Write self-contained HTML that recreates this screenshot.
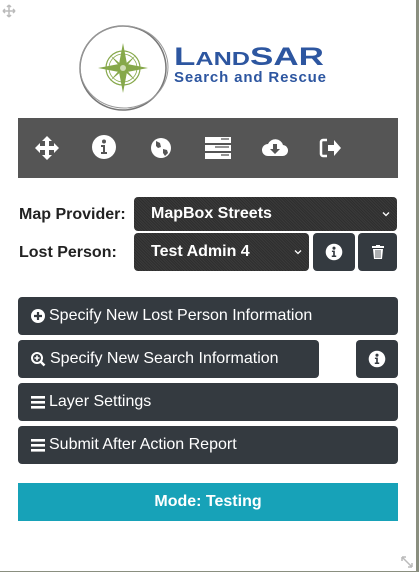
<!DOCTYPE html>
<html><head><meta charset="utf-8"><style>
*{margin:0;padding:0;box-sizing:border-box}
html,body{width:419px;height:572px;overflow:hidden;background:#8a8f80;font-family:"Liberation Sans",sans-serif}
#p{position:absolute;left:0;top:0;width:416px;height:571px;background:#fff}
.a{position:absolute}
.tb{left:18px;top:118px;width:380px;height:60px;background:#555}
.lbl{font-weight:bold;font-size:16px;color:#222}
.sel{background:#333 repeating-linear-gradient(45deg,#3a3a3a 0 1px,#2e2e2e 1px 2px);border-radius:4px;color:#fff;font-weight:bold;font-size:16px;padding-left:17px}
.btn{background:#343a40;border-radius:4px;color:#fff;font-size:16px;padding-left:13px;display:flex;align-items:center}
.btn svg{margin-right:4px}
.ib{background:#343a40;border-radius:4px;display:flex;align-items:center;justify-content:center}
.car{position:absolute;right:7px;top:50%;margin-top:-3px}
</style></head><body><div id="p">
<svg class="a" style="left:2px;top:4px" width="14" height="14" viewBox="0 0 14 14"><path d="M7 1v12M1 7h12M7 1l-2 2M7 1l2 2M7 13l-2-2M7 13l2-2M1 7l2-2M1 7l2 2M13 7l-2-2M13 7l-2 2" stroke="#bbb" stroke-width="1.5" fill="none"/></svg>
<svg class="a" style="left:76px;top:22px" width="96" height="92" viewBox="0 0 96 92">
<ellipse cx="47" cy="46" rx="43" ry="42" fill="none" stroke="#777" stroke-width="1.5"/>
<ellipse cx="48" cy="45" rx="44" ry="41" fill="none" stroke="#999" stroke-width="1"/>
<g transform="translate(47,46)" fill="#86a84a" stroke="#86a84a">
<circle r="17" fill="none" stroke-width="1.2"/><circle r="14" fill="none" stroke-width="0.8"/>
<path d="M0-25L4-4L25 0L4 4L0 25L-4 4L-25 0L-4-4Z" stroke="none"/>
<path d="M13-13L2 0L13 13L0 2L-13 13L-2 0L-13-13L0-2Z" stroke="none"/>
<circle r="3" fill="#cfdcb5" stroke="none"/></g></svg>
<div class="a" style="left:174px;top:44px;color:#2d56a0;font-weight:bold;font-size:25px;line-height:26px;white-space:nowrap;transform:scaleX(1.4);transform-origin:0 0">L<span style="font-size:18px">AND</span>SAR</div>
<div class="a" style="left:174px;top:70px;color:#2d56a0;font-weight:bold;font-size:15px;letter-spacing:0.85px;line-height:16px;white-space:nowrap">Search and Rescue</div>
<div class="a tb"></div>
<svg class="a" style="left:34px;top:135px" width="26" height="26" viewBox="0 0 26 26" fill="#fff"><path d="M13 1l5 5h-3v5h5V8l5 5-5 5v-3h-5v5h3l-5 5-5-5h3v-5H6v3l-5-5 5-5v3h5V6H8z"/></svg>
<svg class="a" style="left:91px;top:134px" width="26" height="26" viewBox="0 0 26 26"><circle cx="13" cy="13" r="12" fill="#fff"/><circle cx="13" cy="7.5" r="2" fill="#555"/><path d="M10 11h4v7h2v2h-6v-2h2v-5h-2z" fill="#555"/></svg>
<svg class="a" style="left:150px;top:137px" width="22" height="22" viewBox="0 0 22 22"><circle cx="11" cy="11" r="10" fill="#fff"/><path d="M6 4l4 2 1 4-3 1-2-2zM13 12l4 1 1 3-3 3-2-3z" fill="#555"/></svg>
<svg class="a" style="left:205px;top:137px" width="26" height="22" viewBox="0 0 26 22" fill="#fff"><rect x="0" y="0" width="26" height="6"/><rect x="0" y="8" width="26" height="6"/><rect x="0" y="16" width="26" height="6"/><path d="M16 2h8M10 10h14M16 18h8" stroke="#555" stroke-width="1.2"/></svg>
<svg class="a" style="left:262px;top:136px" width="26" height="22" viewBox="0 0 26 22"><path d="M6 20a6 6 0 0 1 0-12a8 8 0 0 1 15 1a5.5 5.5 0 0 1-1 11z" fill="#fff"/><path d="M11 8h4v5h3l-5 5-5-5h3z" fill="#555"/></svg>
<svg class="a" style="left:319px;top:138px" width="23" height="20" viewBox="0 0 23 20" fill="#fff"><path d="M8 2H4a2 2 0 0 0-2 2v12a2 2 0 0 0 2 2h4" stroke="#fff" stroke-width="2.5" fill="none"/><path d="M9 7h6V2l7 8-7 8v-5H9z"/></svg>
<div class="a lbl" style="left:19px;top:206px">Map Provider:</div>
<div class="a lbl" style="left:19px;top:244px">Lost Person:</div>
<div class="a sel" style="left:134px;top:197px;width:263px;height:34px;line-height:34px">MapBox Streets<svg class="car" width="8" height="6" viewBox="0 0 8 6"><path d="M1 1.5l3 3 3-3" stroke="#fff" stroke-width="1.3" fill="none"/></svg></div>
<div class="a sel" style="left:134px;top:233px;width:175px;height:38px;line-height:38px">Test Admin 4<svg class="car" width="8" height="6" viewBox="0 0 8 6"><path d="M1 1.5l3 3 3-3" stroke="#fff" stroke-width="1.3" fill="none"/></svg></div>
<div class="a ib" style="left:313px;top:233px;width:42px;height:38px"><svg width="18" height="18" viewBox="0 0 26 26"><circle cx="13" cy="13" r="12" fill="#fff"/><circle cx="13" cy="7.5" r="2.2" fill="#343a40"/><path d="M10 11h4.2v7h2v2.2h-6.4v-2.2h2v-5h-1.8z" fill="#343a40"/></svg></div>
<div class="a ib" style="left:358px;top:233px;width:39px;height:38px"><svg width="12" height="14" viewBox="0 0 12 14" fill="#fff"><rect x="0" y="1" width="12" height="2"/><rect x="4" y="0" width="4" height="2"/><path d="M1 4h10l-1 10H2z"/><path d="M4 5v8M6 5v8M8 5v8" stroke="#343a40" stroke-width="0.8"/></svg></div>
<div class="a btn" style="left:18px;top:297px;width:380px;height:38px"><svg width="14" height="14" viewBox="0 0 14 14"><circle cx="7" cy="7" r="7" fill="#fff"/><path d="M7 3v8M3 7h8" stroke="#343a40" stroke-width="2.2"/></svg>Specify New Lost Person Information</div>
<div class="a btn" style="left:18px;top:340px;width:301px;height:38px"><svg width="15" height="15" viewBox="0 0 15 15"><circle cx="6" cy="6" r="5" fill="none" stroke="#fff" stroke-width="2"/><path d="M9.5 9.5l4 4" stroke="#fff" stroke-width="2.5"/><path d="M6 3.5v5M3.5 6h5" stroke="#fff" stroke-width="1.6"/></svg>Specify New Search Information</div>
<div class="a ib" style="left:356px;top:340px;width:42px;height:38px"><svg width="18" height="18" viewBox="0 0 26 26"><circle cx="13" cy="13" r="12" fill="#fff"/><circle cx="13" cy="7.5" r="2.2" fill="#343a40"/><path d="M10 11h4.2v7h2v2.2h-6.4v-2.2h2v-5h-1.8z" fill="#343a40"/></svg></div>
<div class="a btn" style="left:18px;top:383px;width:380px;height:38px"><svg width="14" height="13" viewBox="0 0 14 13" fill="#fff"><rect y="0" width="14" height="2.6"/><rect y="5" width="14" height="2.6"/><rect y="10" width="14" height="2.6"/></svg>Layer Settings</div>
<div class="a btn" style="left:18px;top:426px;width:380px;height:38px"><svg width="14" height="13" viewBox="0 0 14 13" fill="#fff"><rect y="0" width="14" height="2.6"/><rect y="5" width="14" height="2.6"/><rect y="10" width="14" height="2.6"/></svg>Submit After Action Report</div>
<div class="a" style="left:18px;top:483px;width:380px;height:38px;background:#17a2b8;color:#fff;font-weight:bold;font-size:16px;text-align:center;line-height:38px">Mode: Testing</div>
<svg class="a" style="left:400px;top:555px" width="14" height="14" viewBox="0 0 14 14"><path d="M2 2l10 10M2 2h4M2 2v4M12 12h-4M12 12v-4" stroke="#bbb" stroke-width="1.5" fill="none"/></svg>
</div></body></html>
